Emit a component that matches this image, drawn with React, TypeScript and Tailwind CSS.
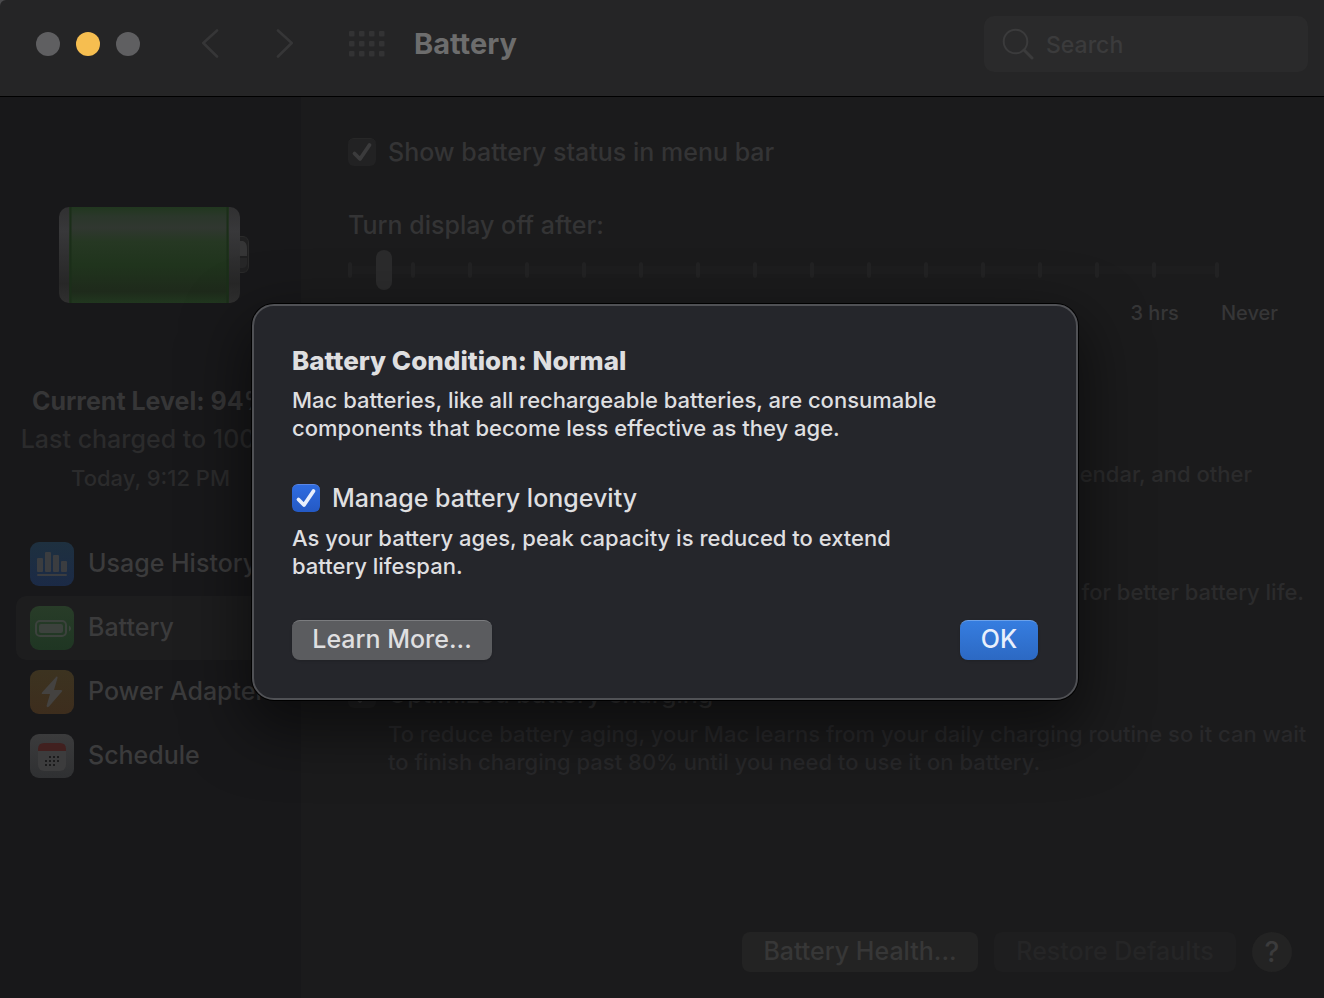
import { useState } from 'react'

type Pane = 'usage' | 'battery' | 'adapter' | 'schedule'

const panes: { id: Pane; label: string; icon: () => React.ReactNode }[] = [
  { id: 'usage', label: 'Usage History', icon: UsageIcon },
  { id: 'battery', label: 'Battery', icon: BatteryIcon },
  { id: 'adapter', label: 'Power Adapter', icon: AdapterIcon },
  { id: 'schedule', label: 'Schedule', icon: ScheduleIcon },
]

export default function App() {
  return (
    <div className="relative flex min-h-screen flex-col overflow-hidden bg-[#4b4b4d] font-['Inter','Liberation_Sans',sans-serif] font-medium">
      <Toolbar />
      <div className="flex flex-1 bg-[#1b1b1c]">
        <Sidebar />
        <Settings />
      </div>
      <HealthDialog />
    </div>
  )
}

function Toolbar() {
  return (
    <header className="flex h-[97px] items-start rounded-tl-md border-b border-black bg-[#252526] pt-4 pr-4 pl-9">
      <div className="flex h-14 flex-1 items-center">
        <div className="flex gap-4">
          <button aria-label="Close" className="size-6 rounded-full bg-[#5f5f61]" />
          <button aria-label="Minimize" className="size-6 rounded-full bg-[#f6be50]" />
          <button aria-label="Zoom" className="size-6 rounded-full bg-[#5f5f61]" />
        </div>
        <button aria-label="Back" className="ml-[60px]">
          <svg width="20" height="30" viewBox="0 0 20 30" fill="none" stroke="#363637" strokeWidth="2.6" strokeLinecap="round" strokeLinejoin="round">
            <path d="M17 1.500L3.300 14L17 27.500" />
          </svg>
        </button>
        <button aria-label="Forward" className="ml-[55px]">
          <svg width="20" height="30" viewBox="0 0 20 30" fill="none" stroke="#363637" strokeWidth="2.6" strokeLinecap="round" strokeLinejoin="round">
            <path d="M3 1.500L16.700 14L3 27.500" />
          </svg>
        </button>
        <button aria-label="Show all" className="ml-[54px]">
          <svg width="36" height="26" viewBox="0 0 36 26" fill="#333334">
            {[0, 10, 20].map((y) =>
              [0, 10, 20, 30].map((x) => <rect key={`${x}-${y}`} x={x} y={y} width="5.500" height="5.500" rx="1" />)
            )}
          </svg>
        </button>
        <h1 className="ml-[29px] text-[29px] leading-8 font-bold text-[#6d6d6d]">Battery</h1>
      </div>
      <label className="flex h-14 w-[324px] items-center gap-3 rounded-[10px] bg-[#2a2a2b] pl-[18px]">
        <svg className="shrink-0" width="32" height="32" viewBox="0 0 32 32" fill="none" stroke="#3b3b3c" strokeLinecap="round">
          <circle cx="13.500" cy="13.500" r="11.800" strokeWidth="2" />
          <path d="M22 22L30 30" strokeWidth="3" />
        </svg>
        <input
          type="text"
          aria-label="Search"
          placeholder="Search"
          className="w-full min-w-0 bg-transparent pt-0.5 text-[23px] text-[#6d6d6d] outline-none placeholder:text-[#3b3b3c]"
        />
      </label>
    </header>
  )
}

function Sidebar() {
  const [active, setActive] = useState<Pane>('battery')

  return (
    <aside className="w-[301px] shrink-0 bg-[#18181a] px-4 pt-[110px]">
      <BatteryPicture />
      <div className="mt-[82px] flex flex-col items-center whitespace-nowrap text-[#2b2b2c]">
        <p className="text-[25px] leading-[30px] font-bold text-[#363637]">Current Level: 94%</p>
        <p className="mt-2 text-[25px] leading-[30px]">Last charged to 100%</p>
        <p className="mt-2.5 text-[22px] leading-7">Today, 9:12 PM</p>
      </div>
      <nav className="mt-10 flex flex-col">
        {panes.map((p) => (
          <button
            key={p.id}
            onClick={() => setActive(p.id)}
            className={`flex h-16 items-center gap-3.5 rounded-[10px] pl-3.5 text-[25px] whitespace-nowrap text-[#3b3b3c] ${
              active === p.id ? 'bg-[#1d1d1e]' : ''
            }`}
          >
            {p.icon()}
            {p.label}
          </button>
        ))}
      </nav>
    </aside>
  )
}

function Settings() {
  const [timeout, setTimeoutValue] = useState(5)

  return (
    <main className="flex min-w-0 flex-1 flex-col pt-[41px] pr-5 pl-[47px]">
      <DimCheckbox label="Show battery status in menu bar" />

      <label htmlFor="display-off" className="mt-[45px] text-[25px] leading-7 text-[#343435]">
        Turn display off after:
      </label>
      <div className="mt-[11px] mr-[85px] grid h-10 items-center">
        <div className="col-start-1 row-start-1 flex h-2 items-center rounded-full bg-[#1d1d1e]">
          <Tick />
          <div className="mx-[59px] flex flex-1 justify-between">
            {Array.from({ length: 14 }, (_, i) => (
              <Tick key={i} />
            ))}
          </div>
          <Tick />
        </div>
        <input
          id="display-off"
          type="range"
          min={0}
          max={150}
          value={timeout}
          onChange={(e) => setTimeoutValue(Number(e.target.value))}
          className="col-start-1 row-start-1 h-10 w-full appearance-none bg-transparent [&::-webkit-slider-thumb]:h-10 [&::-webkit-slider-thumb]:w-4 [&::-webkit-slider-thumb]:appearance-none [&::-webkit-slider-thumb]:rounded-full [&::-webkit-slider-thumb]:bg-[#2b2b2c]"
        />
      </div>
      <div className="mt-[9px] flex justify-end gap-[42px] pr-[26px] text-xl leading-7 text-[#363637]">
        <span>3 hrs</span>
        <span>Never</span>
      </div>

      <p className="mt-[133px] pr-[52px] text-right text-[22px] leading-7 text-[#2b2b2c]">calendar, and other</p>
      <p className="mt-[90px] text-right text-[22px] leading-7 text-[#2b2b2c]">for better battery life.</p>

      <div className="mt-[74px]">
        <DimCheckbox label="Optimized battery charging" />
        <p className="mt-3 pl-10 text-[22px] leading-7 whitespace-nowrap text-[#28282a]">
          To reduce battery aging, your Mac learns from your daily charging routine so it can wait
          <br />
          to finish charging past 80% until you need to use it on battery.
        </p>
      </div>

      <div className="mt-auto mb-[26px] flex justify-end gap-4 pr-3 text-[25px]">
        <button className="h-10 w-[236px] rounded-lg bg-[#232323] text-[#373737]">Battery Health...</button>
        <button className="h-10 w-[242px] rounded-lg bg-[#1e1e1f] text-[#252526]">Restore Defaults</button>
        <button aria-label="Help" className="size-10 rounded-full bg-[#232323] text-[28px] leading-10 text-[#3b3b3c]">
          ?
        </button>
      </div>
    </main>
  )
}

function Tick() {
  return <span className="h-4 w-1 rounded-full bg-[#222223]" />
}

function DimCheckbox({ label }: { label: string }) {
  return (
    <label className="flex h-7 items-center gap-3 text-[25px] leading-7 text-[#343435]">
      <span className="grid size-7 shrink-0">
        <input
          type="checkbox"
          defaultChecked
          className="peer col-start-1 row-start-1 size-7 appearance-none rounded-md border-t border-[#272727] bg-[#222223]"
        />
        <CheckMark className="pointer-events-none invisible col-start-1 row-start-1 text-[#3b3b3c] peer-checked:visible" />
      </span>
      {label}
    </label>
  )
}

function HealthDialog() {
  return (
    <div className="absolute inset-0 flex items-center justify-center pt-1.5 pl-1.5">
      <div
        role="dialog"
        aria-labelledby="health-title"
        className="w-[826px] rounded-[22px] border-2 border-[#505155] bg-[#25262b] px-[38px] pt-[39px] pb-[38px] text-[#dfdfe0] shadow-[0_0_0_1px_#000,0_24px_60px_8px_rgba(0,0,0,0.5)]"
      >
        <h2 id="health-title" className="text-[26px] leading-8 font-extrabold">
          Battery Condition: Normal
        </h2>
        <p className="mt-[9px] max-w-[680px] text-[22px] leading-7">
          Mac batteries, like all rechargeable batteries, are consumable components that become less effective as they age.
        </p>
        <label className="mt-[42px] flex h-7 items-center gap-3 text-[25px] leading-7">
          <span className="grid size-7 shrink-0">
            <input
              type="checkbox"
              defaultChecked
              className="peer col-start-1 row-start-1 size-7 appearance-none rounded-md border-t border-[#5a86e6] bg-gradient-to-b from-[#2f6ce0] to-[#2459c4]"
            />
            <CheckMark className="pointer-events-none invisible col-start-1 row-start-1 text-[#e8effc] peer-checked:visible" />
          </span>
          Manage battery longevity
        </label>
        <p className="mt-3 max-w-[640px] text-[22px] leading-7">
          As your battery ages, peak capacity is reduced to extend battery lifespan.
        </p>
        <div className="mt-10 flex justify-between text-[25px]">
          <button className="h-10 w-[200px] rounded-lg border-t border-[#7b7c7f] bg-[#5b5c5f] pb-0.5 shadow-sm">Learn More...</button>
          <button className="h-10 w-[78px] rounded-lg border-t border-[#6ba1ea] bg-gradient-to-b from-[#367de0] to-[#2c69c3] pb-0.5 text-[#e8effc] shadow-sm">
            OK
          </button>
        </div>
      </div>
    </div>
  )
}

function CheckMark({ className }: { className: string }) {
  return (
    <svg className={className} width="28" height="28" viewBox="0 0 28 28" fill="none" stroke="currentColor" strokeWidth="3.8" strokeLinecap="round" strokeLinejoin="round">
      <path d="M6.500 15.500L12 21L21.500 7" />
    </svg>
  )
}

function BatteryPicture() {
  return (
    <svg className="ml-[43px]" width="191" height="97" viewBox="0 0 191 97">
      <defs>
        <linearGradient id="cell" x1="0" y1="0" x2="0" y2="1">
          <stop offset="0" stopColor="#21371f" />
          <stop offset="0.100" stopColor="#2b372b" />
          <stop offset="0.220" stopColor="#303730" />
          <stop offset="0.360" stopColor="#263823" />
          <stop offset="0.600" stopColor="#20341d" />
          <stop offset="0.880" stopColor="#1e2a1b" />
          <stop offset="1" stopColor="#21371f" />
        </linearGradient>
        <linearGradient id="cap" x1="0" y1="0" x2="0" y2="1">
          <stop offset="0" stopColor="#303031" />
          <stop offset="0.250" stopColor="#38383a" />
          <stop offset="0.800" stopColor="#272727" />
          <stop offset="1" stopColor="#303030" />
        </linearGradient>
      </defs>
      <path d="M180 29.500H184Q189.500 30 189.500 36V59Q189.500 65 184 65.500H180Z" fill="#202021" stroke="#2a2a2a" />
      <path d="M180 34H184Q188 35 188 42V49H180Z" fill="#353536" />
      <path d="M180 51H188V57Q187 61 184 61H180Z" fill="#272728" />
      <rect x="0" y="0" width="181" height="96" rx="10" fill="url(#cap)" />
      <rect x="10" y="0" width="160" height="96" fill="url(#cell)" />
      <path d="M11.500 0V96M168.500 0V96" stroke="#1b2e19" strokeWidth="2" />
    </svg>
  )
}

function UsageIcon() {
  return (
    <svg width="44" height="44" viewBox="0 0 44 44">
      <defs>
        <linearGradient id="usage" x1="0" y1="0" x2="0" y2="1">
          <stop offset="0" stopColor="#1e303f" />
          <stop offset="1" stopColor="#1b2a46" />
        </linearGradient>
      </defs>
      <rect width="44" height="44" rx="9" fill="url(#usage)" />
      <g fill="#3b3d40">
        <rect x="7" y="16" width="6" height="14" rx="1" />
        <rect x="15" y="10" width="6" height="20" rx="1" />
        <rect x="23" y="13" width="6" height="17" rx="1" />
        <rect x="31" y="19" width="6" height="11" rx="1" />
        <rect x="7" y="32" width="30" height="2" rx="1" />
      </g>
    </svg>
  )
}

function BatteryIcon() {
  return (
    <svg width="44" height="44" viewBox="0 0 44 44">
      <defs>
        <linearGradient id="batt" x1="0" y1="0" x2="0" y2="1">
          <stop offset="0" stopColor="#283c28" />
          <stop offset="1" stopColor="#1f3623" />
        </linearGradient>
      </defs>
      <rect width="44" height="44" rx="9" fill="url(#batt)" />
      <rect x="6" y="15" width="30" height="15" rx="4" fill="none" stroke="#3c423d" strokeWidth="2" />
      <rect x="9" y="18" width="24" height="9" rx="2" fill="#3c423d" />
      <path d="M39 19.500Q41 20.500 41 22.500T39 25.500Z" fill="#3c423d" />
    </svg>
  )
}

function AdapterIcon() {
  return (
    <svg width="44" height="44" viewBox="0 0 44 44">
      <defs>
        <linearGradient id="adapter" x1="0" y1="0" x2="0" y2="1">
          <stop offset="0" stopColor="#3c3320" />
          <stop offset="1" stopColor="#3d2d1d" />
        </linearGradient>
      </defs>
      <rect width="44" height="44" rx="9" fill="url(#adapter)" />
      <path d="M26.500 6.500L12 22.500Q11 24 13 24H20L16.500 36Q17 38 19 36.500L32 21.500Q33 20 31 20H24L27.500 8Q28 6 26.500 6.500Z" fill="#444240" />
    </svg>
  )
}

function ScheduleIcon() {
  const dots = [
    [19, 22], [23, 22], [27, 22],
    [15, 26], [19, 26], [23, 26], [27, 26],
    [15, 30], [19, 30], [23, 30],
  ]
  return (
    <svg width="44" height="44" viewBox="0 0 44 44">
      <defs>
        <linearGradient id="sched" x1="0" y1="0" x2="0" y2="1">
          <stop offset="0" stopColor="#3b3b3c" />
          <stop offset="1" stopColor="#2f3032" />
        </linearGradient>
      </defs>
      <rect width="44" height="44" rx="9" fill="url(#sched)" />
      <rect x="8" y="9" width="28" height="28" rx="6" fill="#3c3c3d" />
      <path d="M8 17V15Q8 9 14 9H30Q36 9 36 15V17Z" fill="#41201f" />
      {dots.map(([x, y]) => (
        <rect key={`${x}-${y}`} x={x} y={y} width="2" height="2" fill="#1b1b1c" />
      ))}
    </svg>
  )
}
